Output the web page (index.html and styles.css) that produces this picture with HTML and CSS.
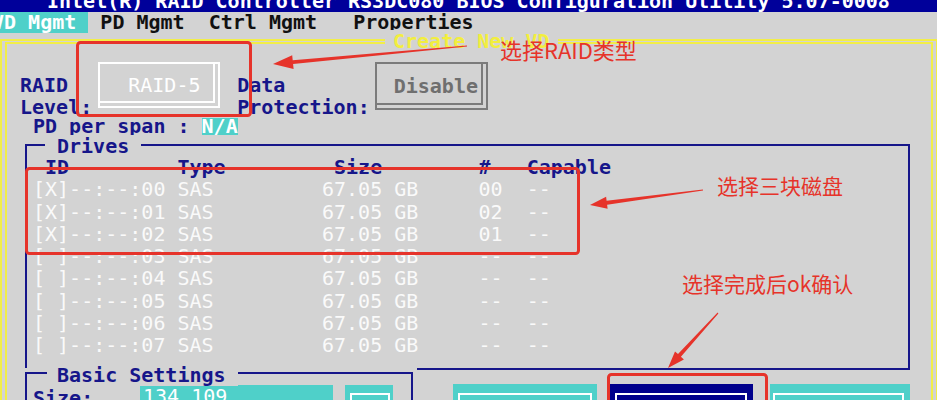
FILE: index.html
```html
<!DOCTYPE html>
<html lang="zh-CN">
<head>
    <meta charset="UTF-8">
    <meta name="viewport" content="width=device-width, initial-scale=1.0">
    <title>Create New VD</title>
    <link rel="stylesheet" href="styles.css">
</head>
<body>
    <div class="titlebar"><div class="title-text">Intel(R) RAID Controller RS3DC080 BIOS Configuration Utility 5.07-0008</div></div>
    <div class="menubar"><span class="menu-active">VD Mgmt </span> PD Mgmt  Ctrl Mgmt   Properties</div>

    <div class="screen">
        <div class="frame">
            <div class="frame-title">Create New VD</div>

            <div class="raid-row">
                <div class="label">RAID<br>Level:</div>
                <div class="box box-white">RAID-5</div>
                <div class="label label-data">Data<br>Protection:</div>
                <div class="box box-grey">Disable</div>
            </div>
            <div class="span-row">PD per span : <span class="hl">N/A</span></div>

            <div class="group drives">
                <div class="group-title">Drives</div>
                <div class="drive-head"> ID         Type         Size        #   Capable</div>
                <div class="drive">[X]--:--:00 SAS         67.05 GB     00  --</div>
                <div class="drive">[X]--:--:01 SAS         67.05 GB     02  --</div>
                <div class="drive">[X]--:--:02 SAS         67.05 GB     01  --</div>
                <div class="drive">[ ]--:--:03 SAS         67.05 GB     --  --</div>
                <div class="drive">[ ]--:--:04 SAS         67.05 GB     --  --</div>
                <div class="drive">[ ]--:--:05 SAS         67.05 GB     --  --</div>
                <div class="drive">[ ]--:--:06 SAS         67.05 GB     --  --</div>
                <div class="drive">[ ]--:--:07 SAS         67.05 GB     --  --</div>
            </div>

            <div class="bottom">
                <div class="group basic">
                    <div class="group-title basic-title">Basic Settings</div>
                    <div class="size-label">Size:</div>
                    <div class="field">134.109</div>
                    <div class="mini"><div class="btn-inner"></div></div>
                </div>
                <div class="actions">
                    <div class="btn btn-cyan"><div class="btn-inner"></div></div>
                    <div class="btn btn-ok"><div class="btn-inner"></div></div>
                    <div class="btn btn-cyan btn-last"><div class="btn-inner"></div></div>
                </div>
            </div>
        </div>
        <div class="side"></div>
    </div>

    <!-- annotation layer -->
    <svg class="marks" width="937" height="400" viewBox="0 0 937 400">
        <g fill="none" stroke="#e6332a" stroke-width="3">
            <rect x="77.5" y="42.5" width="173" height="73" rx="3"/>
            <rect x="26.5" y="168.5" width="552" height="85" rx="3"/>
            <rect x="608.5" y="374.5" width="158" height="40" rx="3"/>
        </g>
        <g fill="#e6332a">
            <polygon points="466.9,45.4 292.7,60.2 292.2,55.2 273,64 293.6,69.1 293.1,64.1 467.1,46.6"/>
            <polygon points="702.9,189.4 606.6,200.8 606.1,196.8 590,205 607.6,208.7 607.1,204.7 703.1,190.6"/>
            <polygon points="717.6,312.6 678,354.1 675,351.4 668,368 683.9,359.5 680.9,356.8 718.4,313.4"/>
        </g>
    </svg>
    <div class="note note-raid">选择RAID类型</div>
    <div class="note note-disks">选择三块磁盘</div>
    <div class="note note-ok">选择完成后ok确认</div>
</body>
</html>
```

FILE: styles.css
```css
html, body {
    margin: 0;
    height: 400px;
    overflow: hidden;
}
body {
    position: relative;
    background-color: #d3d3d3;
    font-family: "DejaVu Sans Mono", "Liberation Mono", monospace;
    font-size: 20px;
    line-height: 22px;
    color: #16168a;
}
.titlebar {
    height: 12px;
    background-color: #00009a;
    overflow: hidden;
}
.title-text {
    margin: -10px 0 0 47px;
    color: #fff;
    font-weight: bold;
    white-space: pre;
}
.menubar {
    height: 21px;
    line-height: 21px;
    text-indent: -4px;
    white-space: pre;
    font-weight: bold;
    color: #111;
}
.menu-active {
    display: inline-block;
    line-height: 21px;
    background-color: #4fd0c9;
    color: #fff;
}
.screen {
    display: flex;
}
.frame {
    position: relative;
    flex: 1;
    height: 400px;
    margin-top: 6px;
    border: 7px double #f2ee48;
    border-top-width: 5px;
}
.side {
    width: 4px;
    height: 400px;
    background-color: #4fd0c9;
}
.frame-title {
    position: absolute;
    top: -14px;
    left: 378px;
    padding: 0 8px;
    background-color: #d3d3d3;
    color: #f2ee3e;
    font-weight: bold;
    white-space: pre;
}
.raid-row {
    display: flex;
    align-items: flex-start;
    height: 53px;
    padding: 18px 0 0 13px;
}
.label {
    margin-top: 12px;
    font-weight: bold;
    white-space: nowrap;
}
.label-data {
    margin-left: 17px;
}
.box {
    box-sizing: border-box;
    white-space: pre;
}
.box-white {
    width: 122px;
    height: 46px;
    margin-left: 6px;
    padding-left: 28px;
    line-height: 42px;
    border: 2px solid #fff;
    box-shadow: inset -3px -3px 0 #d3d3d3, inset -5px -5px 0 #fff;
    color: #fff;
}
.box-grey {
    width: 113px;
    height: 48px;
    margin-left: 5px;
    padding-left: 17px;
    line-height: 44px;
    border: 2px solid #7b7b7b;
    box-shadow: inset -3px -3px 0 #d3d3d3, inset -5px -5px 0 #7b7b7b;
    color: #6f6f6f;
    font-weight: bold;
}
.span-row {
    padding-left: 26px;
    font-weight: bold;
    white-space: pre;
}
.hl {
    display: inline-block;
    line-height: 17px;
    background-color: #4fd0c9;
    color: #fff;
}
.group {
    position: relative;
    border: 2px solid #16168a;
    border-bottom: none;
}
.group-title {
    position: absolute;
    top: -11px;
    left: 18px;
    padding: 0 12px;
    background-color: #d3d3d3;
    font-weight: bold;
    white-space: pre;
}
.drives {
    margin: 7px 21px 0 18px;
    padding: 10px 0 11px 6px;
}
.drive-head, .drive {
    line-height: 22.3px;
    white-space: pre;
}
.drive-head {
    font-weight: bold;
}
.drive {
    color: #fafafa;
}
.bottom {
    display: flex;
    margin: 0 21px 0 18px;
}
.basic {
    box-sizing: border-box;
    display: flex;
    align-items: flex-start;
    width: 388px;
    height: 100px;
    margin-top: 4px;
    padding: 11px 0 0 6px;
}
.basic-title {
    top: -10px;
    left: 20px;
    padding: 0 12px 0 10px;
}
.size-label {
    width: 107px;
    margin-top: 2px;
    font-weight: bold;
}
.field {
    box-sizing: border-box;
    width: 193px;
    height: 22px;
    padding-left: 3px;
    background-color: #4fd0c9;
    color: #fff;
}
.mini {
    box-sizing: border-box;
    width: 48px;
    height: 40px;
    margin-left: 12px;
    padding: 8px 3px 0 5px;
    background-color: #4fd0c9;
}
.actions {
    display: flex;
    flex: 1;
    margin-left: 4px;
    padding: 14px 0 0 36px;
    border-top: 2px solid #16168a;
}
.btn {
    box-sizing: border-box;
    flex-shrink: 0;
    width: 144px;
    height: 40px;
    padding: 9px 5px 0;
}
.btn-cyan {
    background-color: #4fd0c9;
}
.btn-ok {
    margin-left: 12px;
    padding: 9px 6px 0;
    background-color: #00008c;
}
.btn-last {
    width: 140px;
    margin-left: 17px;
    padding: 9px 6px 0 3px;
}
.btn-inner {
    height: 30px;
    border: 2px solid #fff;
}
.marks {
    position: absolute;
    top: 0;
    left: 0;
    pointer-events: none;
}
.note {
    position: absolute;
    font-family: "Noto Sans CJK SC", sans-serif;
    line-height: 1;
    color: #e6332a;
    white-space: nowrap;
}
.note-raid {
    top: 38px;
    left: 500px;
    font-size: 22px;
}
.note-disks {
    top: 175px;
    left: 717px;
    font-size: 21px;
}
.note-ok {
    top: 273px;
    left: 682px;
    font-size: 21px;
}
```
